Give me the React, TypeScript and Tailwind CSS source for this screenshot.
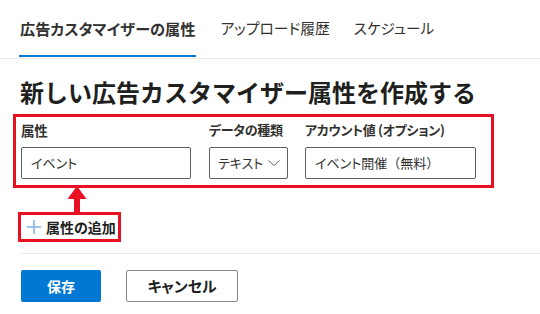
import React from "react";

const font = "[font-family:'Noto_Sans_CJK_JP','Noto_Sans',sans-serif]";
const palt = "[font-feature-settings:'palt']";

export default function App() {
  return (
    <div className={`w-[540px] h-[314px] bg-white text-[#323130] overflow-hidden ${font}`}>
      {/* Tabs */}
      <div className={`flex h-[59px] border-b border-[#edebe9] pl-[19px] gap-[24px] ${palt}`}>
        <div className="flex flex-col justify-end">
          <div className="flex-1 flex items-center px-[1px] text-[15.2px] font-bold text-[#323130] leading-none pt-[2px] whitespace-nowrap">
            広告カスタマイザーの属性
          </div>
          <div className="h-[2px] bg-[#0078d4] mb-[1px]" />
        </div>
        <div className="flex items-center text-[14.8px] text-[#323130] leading-none pb-[1px] whitespace-nowrap">アップロード履歴</div>
        <div className="flex items-center text-[14.6px] text-[#323130] leading-none pb-[1px] whitespace-nowrap">スケジュール</div>
      </div>

      <div className="pl-[20px]">
        <h1 className="mt-[18px] text-[24px] font-bold leading-[30px] text-[#201f1e] whitespace-nowrap">
          新しい広告カスタマイザー属性を作成する
        </h1>
      </div>

      {/* Fields box */}
      <div className={`ml-[13px] mt-[7px] w-[481px] border-[3px] border-[#e81123] pl-[5px] pt-[3px] pb-[6px] flex gap-[17px] ${palt}`}>
        <div className="w-[170px] flex flex-col">
          <label className="text-[13.5px] font-semibold leading-[20px] text-[#323130] tracking-[-0.3px]">属性</label>
          <div className="mt-[7px] h-[32px] border border-[#605e5c] rounded-[2px] flex items-center px-[9px] text-[13px] text-[#323130]">
            イベント
          </div>
        </div>
        <div className="w-[79px] flex flex-col ml-[1px]">
          <label className="text-[13px] font-semibold leading-[20px] whitespace-nowrap tracking-[-0.3px]">データの種類</label>
          <div className="mt-[7px] h-[32px] border border-[#605e5c] rounded-[2px] flex items-center justify-between pl-[8px] pr-[7px] text-[13px]">
            <span>テキスト</span>
            <svg width="12" height="8" viewBox="0 0 12 8" fill="none" stroke="#605e5c" strokeWidth="1">
              <path d="M0.5 1.5 L6 6.5 L11.5 1.5" />
            </svg>
          </div>
        </div>
        <div className="w-[171px] flex flex-col">
          <label className="text-[13px] font-semibold leading-[20px] whitespace-nowrap tracking-[-0.3px]">アカウント値 (オプション)</label>
          <div className="mt-[7px] h-[32px] border border-[#605e5c] rounded-[2px] flex items-center px-[9px] text-[13px] whitespace-nowrap">
            イベント開催<span className="[font-feature-settings:normal]">（無料）</span>
          </div>
        </div>
      </div>

      {/* Arrow */}
      <div className="-mt-[2px] ml-[67px] h-[26px]">
        <svg width="20" height="26" viewBox="0 0 20 26">
          <polygon points="10,0 19.5,13 0.5,13" fill="#e81123" />
          <rect x="7" y="12" width="6" height="14" fill="#e81123" />
        </svg>
      </div>

      {/* Add attribute */}
      <div className={`ml-[18px] w-[103px] h-[30px] border-[3px] border-[#e81123] flex items-center pl-[5px] gap-[4px] whitespace-nowrap ${palt}`}>
        <svg width="16" height="16" viewBox="0 0 16 16" stroke="#7fb2e5" strokeWidth="1.5" className="shrink-0">
          <path d="M8 1 V15 M1 8 H15" />
        </svg>
        <span className="text-[14px] font-bold text-[#201f1e] leading-none">属性の追加</span>
      </div>

      {/* Separator */}
      <div className="ml-[21px] mt-[11px] border-t border-[#edebe9]" />

      {/* Buttons */}
      <div className={`ml-[21px] mt-[16px] flex gap-[25px] ${palt}`}>
        <button className="w-[80px] h-[32px] bg-[#0078d4] rounded-[2px] text-white text-[14px] font-bold">保存</button>
        <button className="w-[112px] h-[32px] border border-[#8a8886] rounded-[2px] text-[15px] font-semibold text-[#201f1e]">キャンセル</button>
      </div>
    </div>
  );
}
